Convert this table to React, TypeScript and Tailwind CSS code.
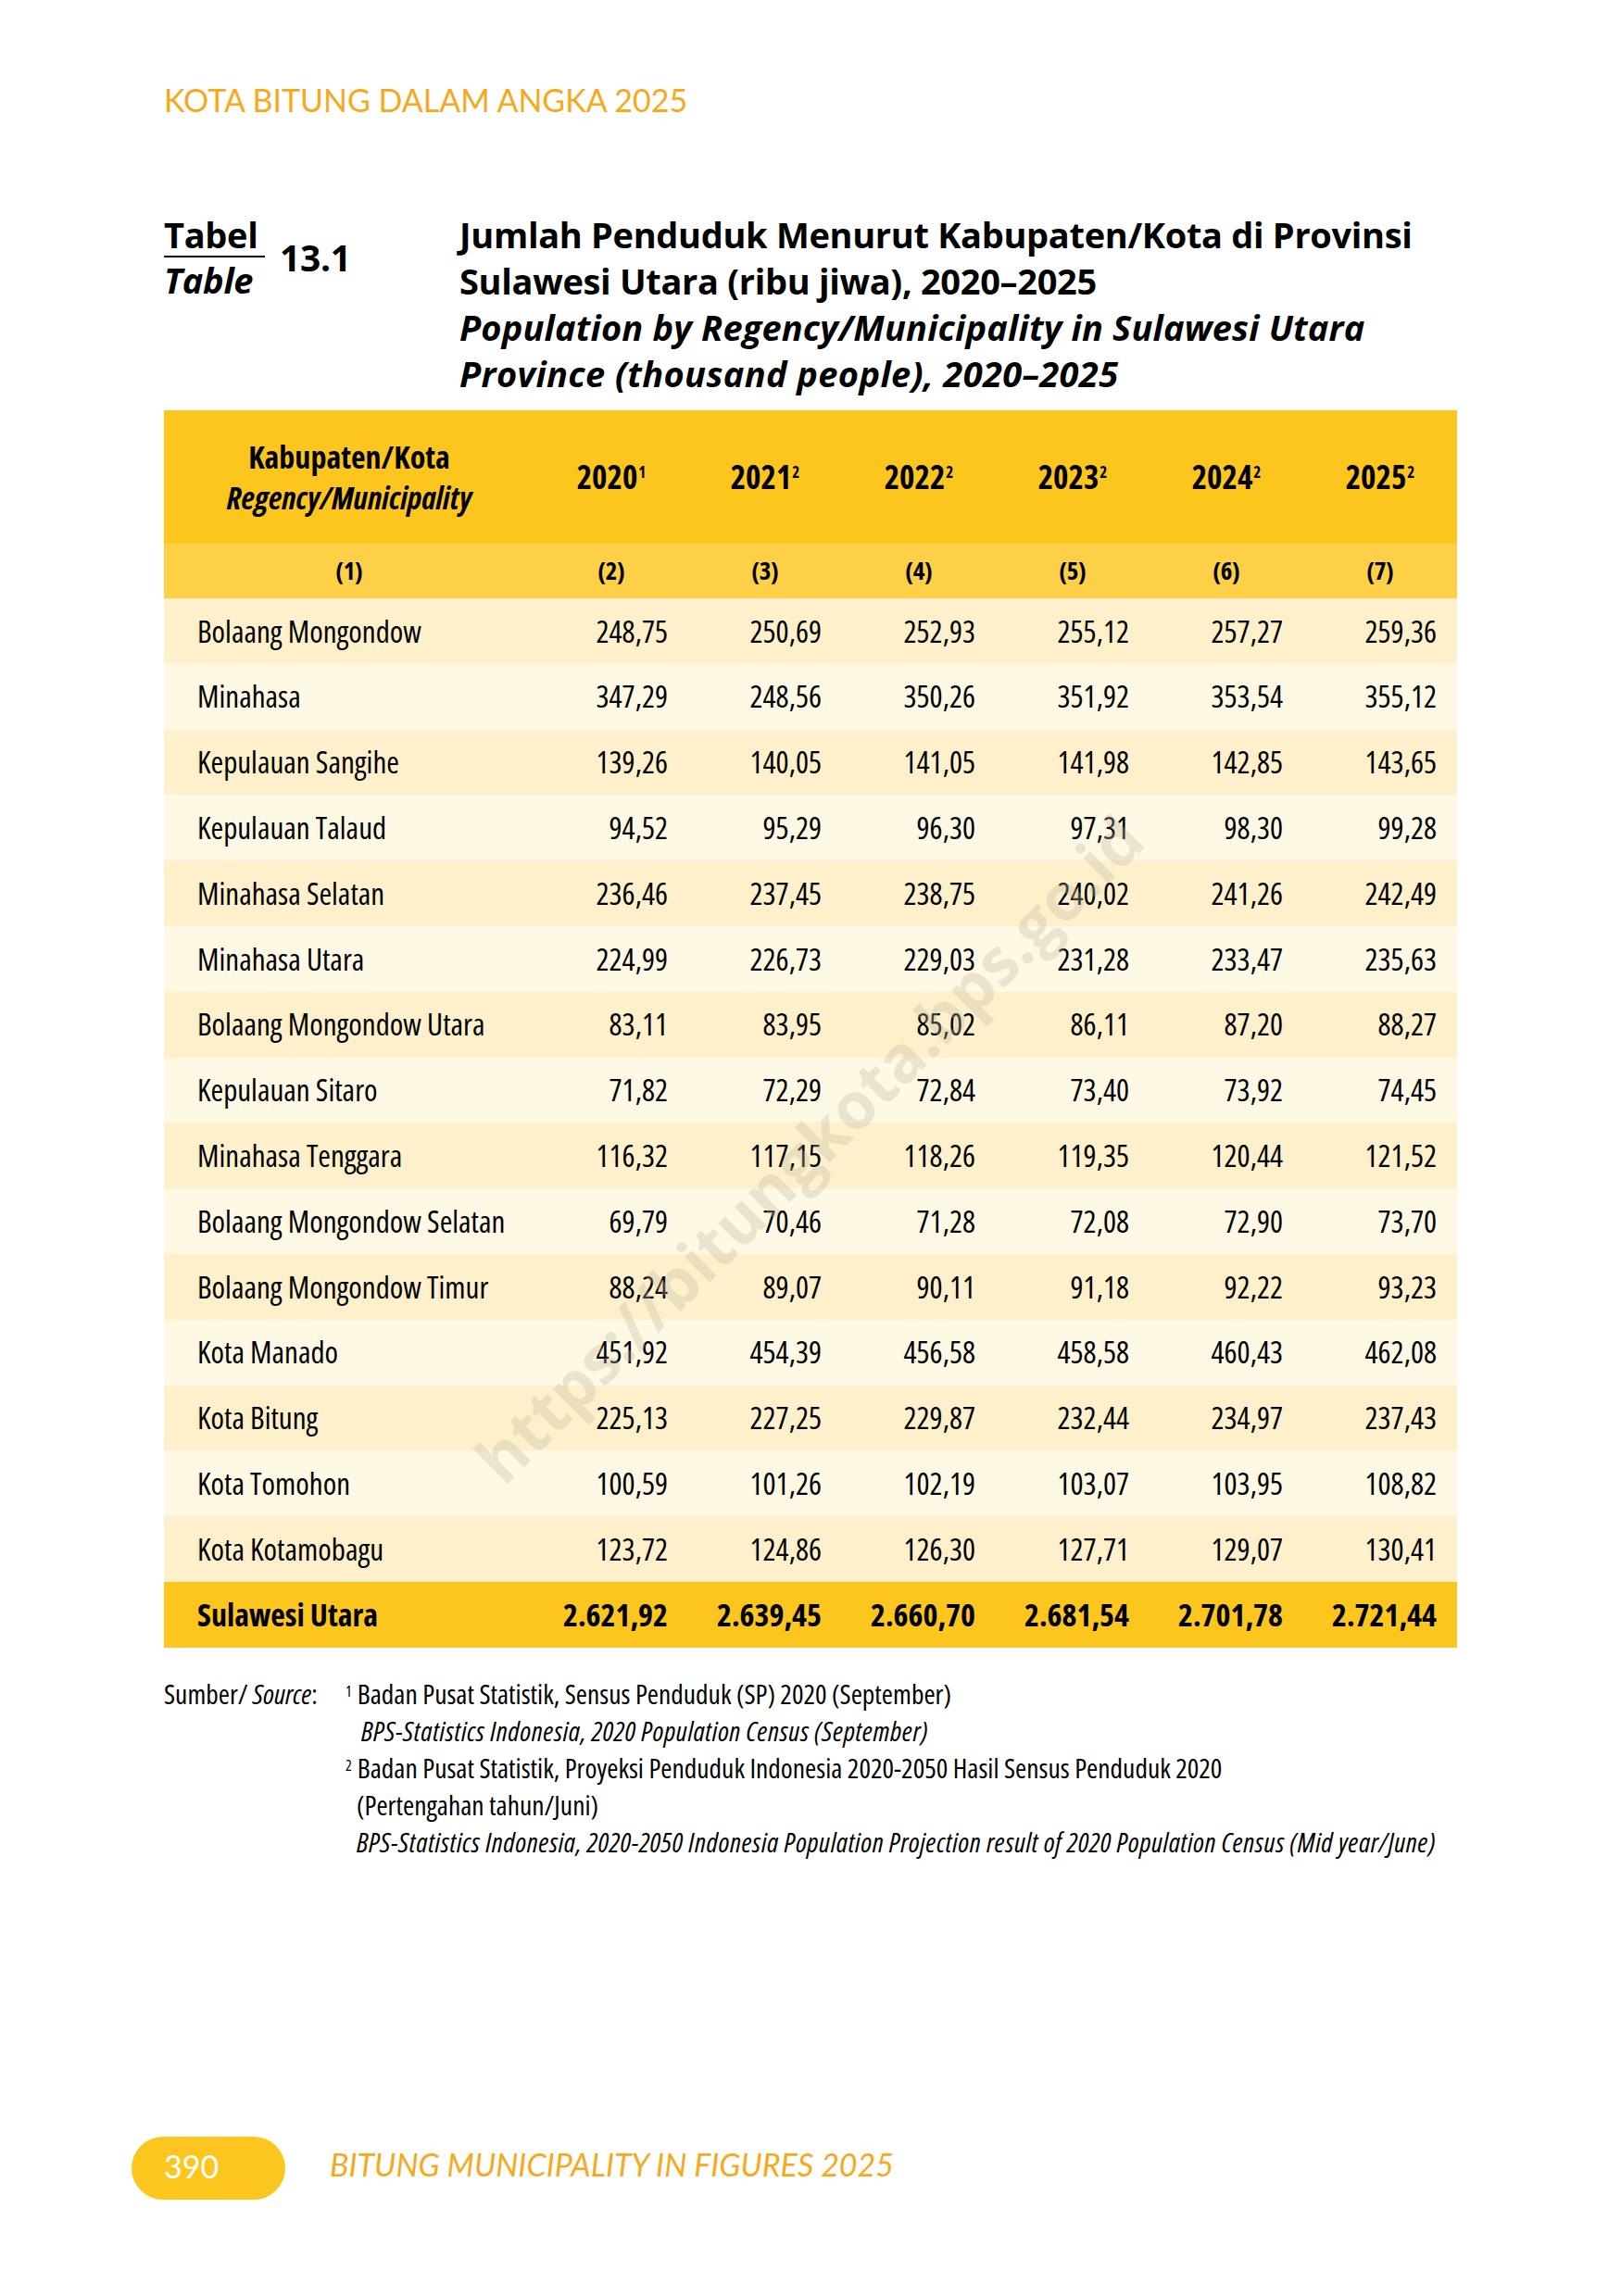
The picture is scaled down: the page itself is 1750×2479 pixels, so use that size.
import React from 'react'

// condensed body face (Open Sans, narrowed through its width axis)
const narrow = "font-['Open_Sans',sans-serif] font-stretch-condensed"

type Row = {
  name: string
  values: string[]
}

const rows: Row[] = [
  { name: 'Bolaang Mongondow', values: ['248,75', '250,69', '252,93', '255,12', '257,27', '259,36'] },
  { name: 'Minahasa', values: ['347,29', '248,56', '350,26', '351,92', '353,54', '355,12'] },
  { name: 'Kepulauan Sangihe', values: ['139,26', '140,05', '141,05', '141,98', '142,85', '143,65'] },
  { name: 'Kepulauan Talaud', values: ['94,52', '95,29', '96,30', '97,31', '98,30', '99,28'] },
  { name: 'Minahasa Selatan', values: ['236,46', '237,45', '238,75', '240,02', '241,26', '242,49'] },
  { name: 'Minahasa Utara', values: ['224,99', '226,73', '229,03', '231,28', '233,47', '235,63'] },
  { name: 'Bolaang Mongondow Utara', values: ['83,11', '83,95', '85,02', '86,11', '87,20', '88,27'] },
  { name: 'Kepulauan Sitaro', values: ['71,82', '72,29', '72,84', '73,40', '73,92', '74,45'] },
  { name: 'Minahasa Tenggara', values: ['116,32', '117,15', '118,26', '119,35', '120,44', '121,52'] },
  { name: 'Bolaang Mongondow Selatan', values: ['69,79', '70,46', '71,28', '72,08', '72,90', '73,70'] },
  { name: 'Bolaang Mongondow Timur', values: ['88,24', '89,07', '90,11', '91,18', '92,22', '93,23'] },
  { name: 'Kota Manado', values: ['451,92', '454,39', '456,58', '458,58', '460,43', '462,08'] },
  { name: 'Kota Bitung', values: ['225,13', '227,25', '229,87', '232,44', '234,97', '237,43'] },
  { name: 'Kota Tomohon', values: ['100,59', '101,26', '102,19', '103,07', '103,95', '108,82'] },
  { name: 'Kota Kotamobagu', values: ['123,72', '124,86', '126,30', '127,71', '129,07', '130,41'] },
]

const total: Row = {
  name: 'Sulawesi Utara',
  values: ['2.621,92', '2.639,45', '2.660,70', '2.681,54', '2.701,78', '2.721,44'],
}

const years = [
  { year: '2020', note: '1' },
  { year: '2021', note: '2' },
  { year: '2022', note: '2' },
  { year: '2023', note: '2' },
  { year: '2024', note: '2' },
  { year: '2025', note: '2' },
]

const cols = 'grid grid-cols-[400px_repeat(6,166px)]'

function TitleBlock() {
  return (
    <div className="flex mt-[98px] font-['Open_Sans',sans-serif] text-black tracking-[-0.02em]">
      <div className="w-[319px] pt-[5px] flex items-center gap-[16px] self-start">
        <div className="flex flex-col">
          <div className="text-[38px] font-bold leading-[40px] pb-[3px] border-b-2 border-black w-[109px]">Tabel</div>
          <div className="text-[38px] font-bold italic leading-[40px] mt-[4px]">Table</div>
        </div>
        <div className="text-[39px] font-bold leading-[40px]">13.1</div>
      </div>
      <div className="flex-1 text-[38px] font-bold leading-[50px]">
        <div>Jumlah Penduduk Menurut Kabupaten/Kota di Provinsi</div>
        <div>Sulawesi Utara (ribu jiwa), 2020–2025</div>
        <div className="italic tracking-[0.004em]">Population by Regency/Municipality in Sulawesi Utara</div>
        <div className="italic tracking-[0.01em]">Province (thousand people), 2020–2025</div>
      </div>
    </div>
  )
}

function DataTable() {
  return (
    <div className={`mt-[15px] w-[1396px] text-black ${narrow}`}>
      {/* header */}
      <div className={`${cols} h-[144px] bg-[#fcc61f] items-center font-bold text-[34px]`}>
        <div className="flex flex-col items-center leading-[44px]">
          <span>Kabupaten/Kota</span>
          <span className="italic">Regency/Municipality</span>
        </div>
        {years.map((y) => (
          <div key={y.year} className="text-center leading-[40px] text-[35px]">
            {y.year}
            <sup className="text-[17px] leading-none align-top relative top-[6px] ml-[1px]">{y.note}</sup>
          </div>
        ))}
      </div>
      <div className={`${cols} h-[59px] bg-[#fdd048] items-center font-bold text-[27px]`}>
        {['(1)', '(2)', '(3)', '(4)', '(5)', '(6)', '(7)'].map((c) => (
          <div key={c} className="text-center">{c}</div>
        ))}
      </div>
      {rows.map((r, i) => (
        <div
          key={r.name}
          className={`${cols} h-[70.8px] items-center text-[33px] ${i % 2 === 0 ? 'bg-[#fef0cb]' : 'bg-[#fff8e5]'}`}
        >
          <div className="pl-[36px] whitespace-nowrap">{r.name}</div>
          {r.values.map((v, j) => (
            <div key={j} className="text-right pr-[22px]">{v}</div>
          ))}
        </div>
      ))}
      <div className={`${cols} h-[71px] items-center text-[34px] font-bold bg-[#fcc61f]`}>
        <div className="pl-[36px]">{total.name}</div>
        {total.values.map((v, j) => (
          <div key={j} className="text-right pr-[22px] whitespace-nowrap">{v}</div>
        ))}
      </div>
    </div>
  )
}

function Sources() {
  return (
    <div className={`mt-[30px] flex text-[29.5px] leading-[40px] text-black whitespace-nowrap ${narrow}`}>
      <div className="w-[196px]">
        Sumber/ <span className="italic">Source</span>:
      </div>
      <div className="flex flex-col">
        <div>
          <sup className="text-[16px] mr-[6px]">1</sup>Badan Pusat Statistik, Sensus Penduduk (SP) 2020 (September)
        </div>
        <div className="italic tracking-[0.02em] pl-[17px]">BPS-Statistics Indonesia, 2020 Population Census (September)</div>
        <div>
          <sup className="text-[16px] mr-[6px]">2</sup>Badan Pusat Statistik, Proyeksi Penduduk Indonesia 2020-2050 Hasil Sensus Penduduk 2020
        </div>
        <div className="pl-[12px]">(Pertengahan tahun/Juni)</div>
        <div className="italic tracking-[0.02em] pl-[12px]">
          BPS-Statistics Indonesia, 2020-2050 Indonesia Population Projection result of 2020 Population Census (Mid year/June)
        </div>
      </div>
    </div>
  )
}

export default function App() {
  return (
    <div className="relative w-[1750px] h-[2479px] bg-white flex flex-col px-[177px] overflow-hidden">
      <div className="pt-[86px] text-[34px] leading-[44px] text-[#f7a81b] font-['Lato',sans-serif]">
        KOTA BITUNG DALAM ANGKA 2025
      </div>

      <TitleBlock />
      <DataTable />
      <Sources />

      {/* footer */}
      <div className="mt-auto mb-[104px] -ml-[35px] flex items-center gap-[48px]">
        <div className="w-[166px] h-[68px] rounded-full bg-[#fcc61f] flex items-center pl-[35px] pb-[6px] text-white text-[34px] font-['Lato',sans-serif]">
          390
        </div>
        <div className="pb-[10px] text-[34px] italic text-[#f7a81b] font-['Lato',sans-serif]">
          BITUNG MUNICIPALITY IN FIGURES 2025
        </div>
      </div>

      {/* watermark */}
      <div className="pointer-events-none absolute left-[873px] top-[1240px] -translate-x-1/2 -translate-y-1/2 -rotate-45 whitespace-nowrap text-[70px] font-bold text-[rgba(190,182,165,0.32)] font-['Open_Sans',sans-serif]">
        https://bitungkota.bps.go.id
      </div>
    </div>
  )
}
